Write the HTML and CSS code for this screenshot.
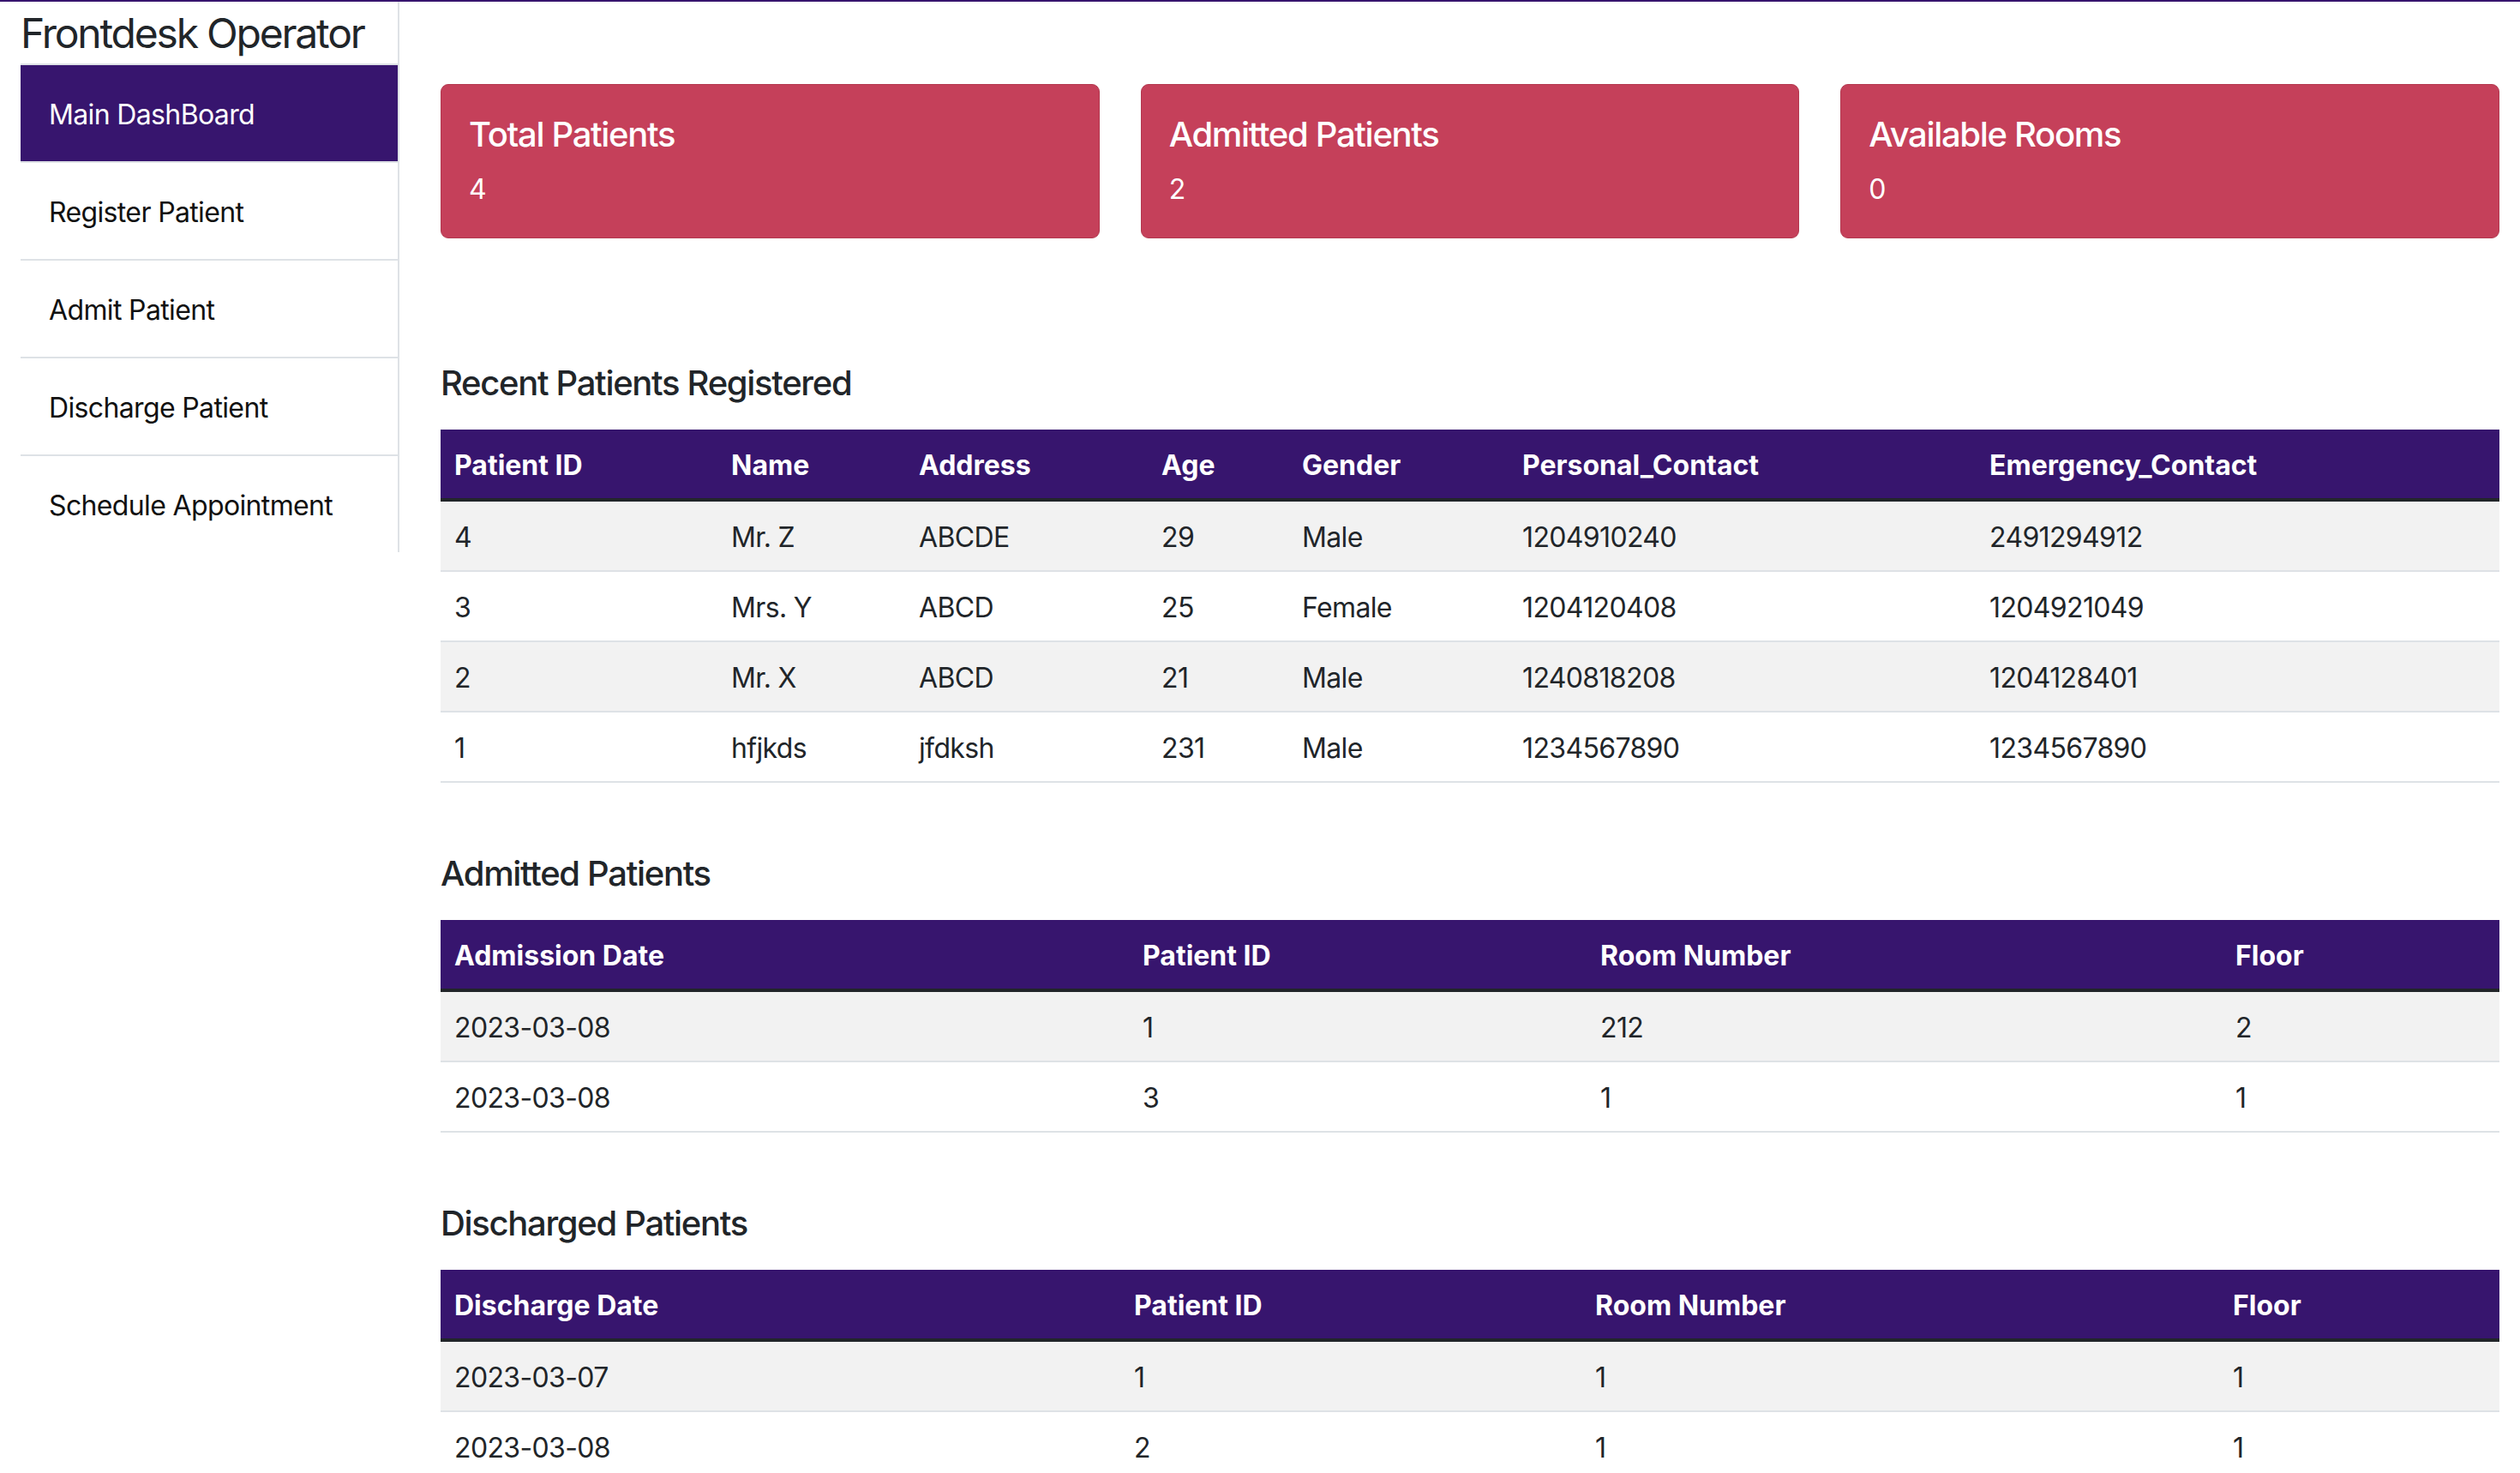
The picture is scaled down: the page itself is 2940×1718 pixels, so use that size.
FILE: index.html
```html
<!DOCTYPE html>
<html lang="en">
<head>
<meta charset="utf-8">
<title>Frontdesk Operator</title>
<link rel="stylesheet" href="styles.css">
</head>
<body>
<div class="page">
  <aside class="sidebar">
    <h4 class="brand">Frontdesk Operator</h4>
    <nav class="menu">
      <a class="menu-item active" href="#">Main DashBoard</a>
      <a class="menu-item" href="#">Register Patient</a>
      <a class="menu-item" href="#">Admit Patient</a>
      <a class="menu-item" href="#">Discharge Patient</a>
      <a class="menu-item" href="#">Schedule Appointment</a>
    </nav>
  </aside>
  <main class="main">
    <div class="stats">
      <div class="stat-card">
        <h5 class="stat-title">Total Patients</h5>
        <p class="stat-value">4</p>
      </div>
      <div class="stat-card">
        <h5 class="stat-title">Admitted Patients</h5>
        <p class="stat-value">2</p>
      </div>
      <div class="stat-card">
        <h5 class="stat-title">Available Rooms</h5>
        <p class="stat-value">0</p>
      </div>
    </div>

    <h5 class="section-title">Recent Patients Registered</h5>
    <table class="data-table">
      <colgroup>
        <col class="r1"><col class="r2"><col class="r3"><col class="r4"><col class="r5"><col class="r6"><col class="r7">
      </colgroup>
      <thead>
        <tr><th>Patient ID</th><th>Name</th><th>Address</th><th>Age</th><th>Gender</th><th>Personal_Contact</th><th>Emergency_Contact</th></tr>
      </thead>
      <tbody>
        <tr><td>4</td><td>Mr. Z</td><td>ABCDE</td><td>29</td><td>Male</td><td>1204910240</td><td>2491294912</td></tr>
        <tr><td>3</td><td>Mrs. Y</td><td>ABCD</td><td>25</td><td>Female</td><td>1204120408</td><td>1204921049</td></tr>
        <tr><td>2</td><td>Mr. X</td><td>ABCD</td><td>21</td><td>Male</td><td>1240818208</td><td>1204128401</td></tr>
        <tr><td>1</td><td>hfjkds</td><td>jfdksh</td><td>231</td><td>Male</td><td>1234567890</td><td>1234567890</td></tr>
      </tbody>
    </table>

    <h5 class="section-title">Admitted Patients</h5>
    <table class="data-table">
      <colgroup>
        <col class="a1"><col class="a2"><col class="a3"><col class="a4">
      </colgroup>
      <thead>
        <tr><th>Admission Date</th><th>Patient ID</th><th>Room Number</th><th>Floor</th></tr>
      </thead>
      <tbody>
        <tr><td>2023-03-08</td><td>1</td><td>212</td><td>2</td></tr>
        <tr><td>2023-03-08</td><td>3</td><td>1</td><td>1</td></tr>
      </tbody>
    </table>

    <h5 class="section-title">Discharged Patients</h5>
    <table class="data-table">
      <colgroup>
        <col class="d1"><col class="d2"><col class="d3"><col class="d4">
      </colgroup>
      <thead>
        <tr><th>Discharge Date</th><th>Patient ID</th><th>Room Number</th><th>Floor</th></tr>
      </thead>
      <tbody>
        <tr><td>2023-03-07</td><td>1</td><td>1</td><td>1</td></tr>
        <tr><td>2023-03-08</td><td>2</td><td>1</td><td>1</td></tr>
      </tbody>
    </table>
  </main>
</div>
</body>
</html>
```

FILE: styles.css
```css
* { box-sizing: border-box; }

html, body {
  margin: 0;
  padding: 0;
  background: #ffffff;
}

body {
  font-family: "Inter", "Liberation Sans", Arial, sans-serif;
  font-size: 32px;
  line-height: 1.5;
  color: #212529;
  letter-spacing: -0.02em;
  border-top: 2px solid #37156e;
}

.page {
  display: flex;
  align-items: flex-start;
}

/* Sidebar */
.sidebar {
  width: 466px;
  flex: 0 0 466px;
  padding-left: 24px;
  border-right: 2px solid #dee2e6;
}

.brand {
  margin: 8px 0 6px 0;
  font-size: 48px;
  font-weight: 400;
  line-height: 58px;
  color: #212529;
  letter-spacing: -0.046em;
}

.menu {
  display: flex;
  flex-direction: column;
}

.menu-item {
  display: block;
  padding: 34px 33px 30px;
  line-height: 48px;
  border-top: 2px solid #dee2e6;
  color: #111111;
  text-decoration: none;
}

.menu-item.active {
  background: #37156e;
  color: #ffffff;
}

/* Main */
.main {
  flex: 1;
  min-width: 0;
  padding: 96px 24px 0 48px;
}

.stats {
  display: grid;
  grid-template-columns: repeat(3, 1fr);
  gap: 48px;
  margin-bottom: 143px;
}

.stat-card {
  min-height: 180px;
  padding: 34px 32px 30px;
  background: #c5405a;
  border: 1px solid #b3384f;
  border-radius: 9px;
  color: #ffffff;
}

.stat-title {
  margin: 0 0 16px 0;
  font-size: 40px;
  font-weight: 500;
  line-height: 48px;
  letter-spacing: -0.033em;
}

.stat-value {
  margin: 0;
  line-height: 48px;
}

.section-title {
  margin: 0 0 30px 0;
  padding-top: 2px;
  font-size: 40px;
  font-weight: 500;
  line-height: 48px;
  letter-spacing: -0.033em;
  color: #212529;
}

.data-table {
  width: 100%;
  table-layout: fixed;
  border-collapse: collapse;
  margin-bottom: 80px;
}

.data-table th,
.data-table td {
  padding: 18px 16px 14px;
  line-height: 48px;
  text-align: left;
  vertical-align: top;
  white-space: nowrap;
}

.data-table thead th {
  background: #37156e;
  color: #ffffff;
  font-weight: 700;
  letter-spacing: 0;
  border-bottom: 4px solid #212529;
}

.data-table tbody td {
  border-bottom: 2px solid #dee2e6;
}

.data-table tbody tr:nth-child(odd) td {
  background: #f2f2f2;
}

/* column widths: recent patients */
.r1 { width: 323px; }
.r2 { width: 219px; }
.r3 { width: 283px; }
.r4 { width: 164px; }
.r5 { width: 257px; }
.r6 { width: 545px; }
.r7 { width: 611px; }

/* admitted */
.a1 { width: 803px; }
.a2 { width: 534px; }
.a3 { width: 741px; }
.a4 { width: 324px; }

/* discharged */
.d1 { width: 793px; }
.d2 { width: 538px; }
.d3 { width: 744px; }
.d4 { width: 327px; }
```
